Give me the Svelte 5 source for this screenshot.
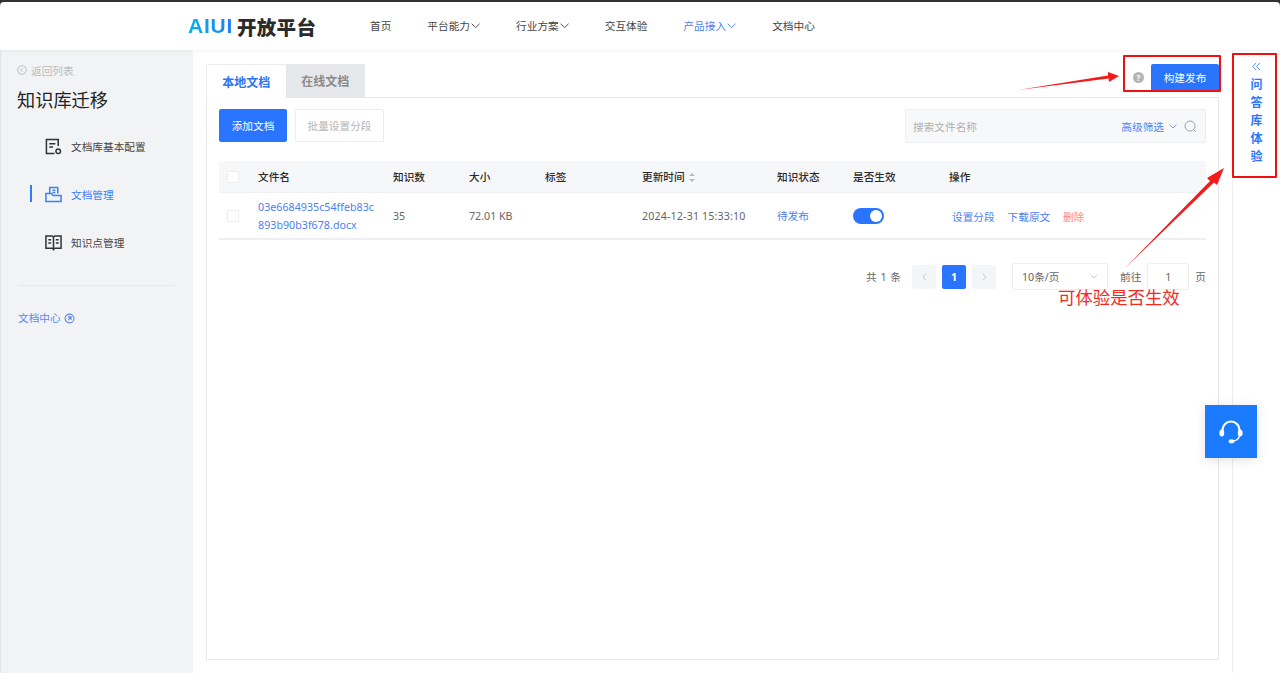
<script>
	const navItems = [
		{ label: '首页' },
		{ label: '平台能力', arrow: true },
		{ label: '行业方案', arrow: true },
		{ label: '交互体验' },
		{ label: '产品接入', arrow: true, active: true },
		{ label: '文档中心' }
	];

	const columns = ['文件名', '知识数', '大小', '标签', '更新时间', '知识状态', '是否生效', '操作'];
</script>

<div class="window">
	<header class="topbar">
		<div class="logo">
			<span class="logo-mark">AIUI</span>
			<span class="logo-text">开放平台</span>
		</div>
		<nav class="nav">
			{#each navItems as item}
				<span class="nav-item" class:active={item.active}>
					{item.label}
					{#if item.arrow}
						<svg class="nav-arrow" viewBox="0 0 10 6"><path d="M.7.8 5 5 9.3.8" /></svg>
					{/if}
				</span>
			{/each}
		</nav>
	</header>

	<div class="body">
		<aside class="sidebar">
			<div class="back">
				<svg viewBox="0 0 12 12" class="back-icon">
					<circle cx="6" cy="6" r="5.2" />
					<path d="M6.8 3.600 4.400 6l2.400 2.400" />
				</svg>
				返回列表
			</div>
			<h1>知识库迁移</h1>
			<ul class="menu">
				<li>
					<svg viewBox="0 0 18 18">
						<path d="M14 8.500V1.500H1.500v15H10" />
						<path d="M4.500 6h6.500M4.500 9.500h4" />
						<circle cx="14" cy="14" r="2.400" />
					</svg>
					文档库基本配置
				</li>
				<li class="current">
					<svg viewBox="0 0 18 18">
						<path d="M5 7.500V1.500h8.500v6.500" />
						<path d="M1 16.500V8h6l1.500 2H17v6.500z" />
						<path d="M8 4.500h3M8 7h3" />
					</svg>
					文档管理
				</li>
				<li>
					<svg viewBox="0 0 18 18">
						<path d="M1 2h6.500L9 3l1.500-1H17v13h-6.500L9 16l-1.500-1H1z" />
						<path d="M9 3v14.500M3.500 6h3M3.500 9.500h3M11.500 6h3M11.500 9.500h3" />
					</svg>
					知识点管理
				</li>
			</ul>
			<div class="doc-link">
				文档中心
				<svg viewBox="0 0 12 12">
					<circle cx="6" cy="6" r="4.800" />
					<path d="M4.300 4.200h3.400v3.400M7.500 4.400 4.300 7.700" />
				</svg>
			</div>
		</aside>

		<main class="main">
			<div class="tabbar">
				<div class="tabs">
					<span class="tab selected">本地文档</span>
					<span class="tab">在线文档</span>
				</div>
				<div class="publish">
					<span class="help">?</span>
					<button class="publish-btn">构建发布</button>
				</div>
			</div>

			<section class="panel">
				<div class="toolbar">
					<button class="btn primary">添加文档</button>
					<button class="btn plain">批量设置分段</button>
					<div class="search">
						<span class="placeholder">搜索文件名称</span>
						<span class="filter">高级筛选</span>
						<svg class="filter-arrow" viewBox="0 0 10 6"><path d="M.7.8 5 5 9.3.8" /></svg>
						<svg class="search-icon" viewBox="0 0 14 14">
							<circle cx="6.500" cy="6.500" r="5.400" />
							<path d="m10.500 10.500 2.300 2.300" />
						</svg>
					</div>
				</div>

				<table>
					<colgroup>
						<col class="c-check" />
						<col class="c-name" />
						<col class="c-count" />
						<col class="c-size" />
						<col class="c-tag" />
						<col class="c-time" />
						<col class="c-state" />
						<col class="c-on" />
						<col />
					</colgroup>
					<thead>
						<tr>
							<th><span class="check"></span></th>
							{#each columns as col}
								<th>
									{col}
									{#if col === '更新时间'}
										<span class="sort"></span>
									{/if}
								</th>
							{/each}
						</tr>
					</thead>
					<tbody>
						<tr>
							<td><span class="check"></span></td>
							<td class="link">03e6684935c54ffeb83c<br />893b90b3f678.docx</td>
							<td>35</td>
							<td>72.01 KB</td>
							<td></td>
							<td class="time">2024-12-31 15:33:10</td>
							<td class="link">待发布</td>
							<td><span class="switch"></span></td>
							<td class="actions">
								<span class="link">设置分段</span>
								<span class="link">下载原文</span>
								<span class="danger">删除</span>
							</td>
						</tr>
					</tbody>
				</table>

				<div class="pager">
					<span class="total">共 1 条</span>
					<span class="page-btn">
						<svg viewBox="0 0 6 10"><path d="M5 1 1 5l4 4" /></svg>
					</span>
					<span class="page-btn on">1</span>
					<span class="page-btn">
						<svg viewBox="0 0 6 10"><path d="m1 1 4 4-4 4" /></svg>
					</span>
					<span class="size-select">
						10条/页
						<svg viewBox="0 0 10 6"><path d="M.7.8 5 5 9.300.8" /></svg>
					</span>
					<span class="goto">前往</span>
					<span class="page-input">1</span>
					<span class="goto">页</span>
				</div>
			</section>
		</main>

		<aside class="qa">
			<svg class="qa-arrow" viewBox="0 0 9 9"><path d="M4.200.8.800 4.500l3.400 3.700M8 .8 4.600 4.500 8 8.200" /></svg>
			<span>问</span>
			<span>答</span>
			<span>库</span>
			<span>体</span>
			<span>验</span>
		</aside>
	</div>

	<button class="support" aria-label="客服">
		<svg viewBox="0 0 24 24">
			<path class="band" d="M3.500 12V10a8.500 8.500 0 0 1 17 0v2" />
			<path class="band thin" d="M20.500 15c-.3 3.500-3 5.800-7 6" />
			<ellipse cx="2.800" cy="13" rx="2.400" ry="3.600" />
			<ellipse cx="21.200" cy="13" rx="2.400" ry="3.600" />
			<ellipse cx="12.500" cy="21.300" rx="2.800" ry="2" />
		</svg>
	</button>

	<!-- hand drawn annotations on top of the screenshot -->
	<span class="mark mark-publish"></span>
	<span class="mark mark-qa"></span>
	<svg class="arrows" viewBox="0 0 1280 673">
		<polygon points="1018,90 1108,75.500 1108,72 1119,76 1109,82 1108.500,78.500" />
		<polygon points="1125,268 1210,181 1207,178 1224,168 1217,185 1214,182.500" />
	</svg>
	<span class="note">可体验是否生效</span>
</div>

<style>
	:global(body) {
		margin: 0;
		background: #333;
	}

	.window {
		position: relative;
		height: 671px;
		margin-top: 2px;
		overflow: hidden;
		background: #fff;
		border-radius: 4px 4px 0 0;
		font-family: 'Noto Sans', 'Noto Sans CJK SC', sans-serif;
		font-size: 10.67px;
		color: #444;
		display: flex;
		flex-direction: column;
	}

	svg {
		fill: none;
		stroke: currentColor;
	}

	/* top navigation */
	.topbar {
		flex: none;
		height: 48px;
		padding-left: 188px;
		display: flex;
		align-items: center;
		box-shadow: 0 1px 4px rgba(0, 0, 0, 0.05);
		position: relative;
	}

	.logo {
		width: 182px;
		display: flex;
		align-items: center;
		gap: 2px;
	}

	.logo-mark {
		width: 47px;
		font-family: 'Liberation Sans', sans-serif;
		font-size: 21px;
		font-weight: 700;
		letter-spacing: 0.800px;
		background: linear-gradient(90deg, #06b4e8, #1f7bfa);
		-webkit-background-clip: text;
		background-clip: text;
		color: transparent;
	}

	.logo-text {
		font-size: 19.500px;
		font-weight: 900;
		letter-spacing: 0.300px;
		color: #2b2b2b;
	}

	.nav {
		display: flex;
	}

	.nav-item {
		display: flex;
		align-items: center;
		margin-right: 36px;
		color: #444;
		line-height: 16px;
	}

	.nav-item.active {
		color: #4a84f5;
	}

	.nav-arrow {
		width: 9.300px;
		height: 5.500px;
		stroke-width: 1;
		margin-left: 0.800px;
	}

	.body {
		flex: 1;
		display: flex;
		min-height: 0;
	}

	/* left menu */
	.sidebar {
		flex: none;
		width: 193px;
		box-sizing: border-box;
		padding: 12px 18px 0 16px;
		background: #f2f3f5;
		border-left: 1px solid #e4e4e6;
	}

	.back {
		display: flex;
		align-items: center;
		gap: 4px;
		height: 16px;
		color: #bbb;
	}

	.back-icon {
		width: 10px;
		height: 10px;
		stroke-width: 1.200;
	}

	h1 {
		margin: 7px 0 0 0;
		font-size: 18.200px;
		font-weight: 400;
		line-height: 30px;
		color: #222;
	}

	.menu {
		list-style: none;
		margin: 7px 0 0 1px;
		padding: 0 0 19px;
		border-bottom: 1px solid #e6e7ea;
	}

	.menu li {
		position: relative;
		display: flex;
		align-items: center;
		gap: 9px;
		height: 48px;
		padding-left: 27px;
		color: #444;
	}

	.menu li svg {
		width: 17px;
		height: 17px;
		stroke-width: 1.600;
		color: #333;
	}

	.menu li.current,
	.menu li.current svg {
		color: #3f7ff5;
	}

	.menu li.current::before {
		content: '';
		position: absolute;
		left: 12px;
		top: 15px;
		width: 2px;
		height: 17px;
		background: #2e7bff;
	}

	.doc-link {
		margin-top: 23px;
		display: flex;
		align-items: center;
		gap: 3px;
		margin-left: 1px;
		color: #5b87f5;
		line-height: 18px;
	}

	.doc-link svg {
		width: 11px;
		height: 11px;
		stroke-width: 1.200;
	}

	/* main card */
	.main {
		flex: 1;
		min-width: 0;
		display: flex;
		flex-direction: column;
		padding: 14px 13px 13px;
	}

	.tabbar {
		flex: none;
		height: 33px;
		box-sizing: content-box;
		display: flex;
		justify-content: space-between;
		border-bottom: 1px solid #e8e8ea;
	}

	.tabs {
		display: flex;
	}

	.tab {
		width: 79.500px;
		height: 33px;
		display: flex;
		align-items: center;
		justify-content: center;
		font-size: 12px;
		font-weight: 700;
		color: #8a8a8a;
		background: #e6e7ea;
	}

	.tab.selected {
		color: #2a75f6;
		background: #fff;
		margin-bottom: -1px;
		height: 34px;
		border: solid #eeeeef;
		border-width: 1px 0 0 1px;
		box-sizing: border-box;
	}

	.publish {
		display: flex;
		align-items: flex-start;
		gap: 7px;
	}

	.help {
		width: 11px;
		height: 11px;
		margin-top: 8px;
		border-radius: 50%;
		background: #b4b4b4;
		color: #fff;
		font-size: 8px;
		font-weight: 700;
		line-height: 11px;
		text-align: center;
	}

	.publish-btn {
		width: 68px;
		height: 26px;
		padding: 0;
		border: 0;
		border-radius: 2px 2px 0 0;
		background: #2a75ff;
		color: #fff;
		font: inherit;
	}

	.panel {
		flex: 1;
		min-height: 0;
		padding: 11px 12px 0;
		border: 1px solid #e8e8ea;
		border-top: 0;
	}

	.toolbar {
		display: flex;
		align-items: flex-start;
		height: 34px;
	}

	.btn {
		height: 33px;
		padding: 0;
		border-radius: 2px;
		font: inherit;
	}

	.btn.primary {
		width: 68px;
		border: 0;
		background: #2a75ff;
		color: #fff;
	}

	.btn.plain {
		width: 89px;
		margin-left: 8px;
		border: 1px solid #ececee;
		background: #fff;
		color: #b5b5b5;
	}

	.search {
		margin-left: auto;
		width: 301px;
		height: 34px;
		box-sizing: border-box;
		padding: 0 8px 0 7px;
		display: flex;
		align-items: center;
		background: #f7f8fa;
		border: 1px solid #eeeff1;
		border-radius: 2px;
	}

	.placeholder {
		flex: 1;
		color: #b0b0b0;
	}

	.filter {
		color: #4f83f5;
	}

	.filter-arrow {
		width: 8px;
		height: 5px;
		margin-left: 5px;
		color: #4f83f5;
	}

	.search-icon {
		width: 13px;
		height: 13px;
		margin-left: 7px;
		color: #9a9a9a;
	}

	/* file table */
	table {
		width: 100%;
		margin-top: 18px;
		table-layout: fixed;
		border-collapse: collapse;
	}

	.c-check { width: 39px; }
	.c-name { width: 135px; }
	.c-count { width: 76px; }
	.c-size { width: 76px; }
	.c-tag { width: 97px; }
	.c-time { width: 135px; }
	.c-state { width: 76px; }
	.c-on { width: 96px; }

	th {
		height: 31px;
		padding: 0;
		text-align: left;
		font-weight: 500;
		color: #2a2a2a;
		background: #f6f7f9;
		border-bottom: 1px solid #eef0f3;
	}

	td {
		height: 45px;
		padding: 0;
		line-height: 18px;
		color: #666;
		border-bottom: 2px solid #eeeff3;
	}

	td.link,
	span.link {
		color: #4d80f5;
		letter-spacing: 0.030px;
	}

	td.time {
		letter-spacing: 0.150px;
	}

	.check {
		display: block;
		width: 10px;
		height: 10px;
		margin-left: 8px;
		background: #fff;
		border: 1px solid #eeeeef;
		border-radius: 1px;
	}

	.sort {
		display: inline-block;
		position: relative;
		width: 6px;
		height: 9px;
		margin-left: 2px;
		vertical-align: -1px;
	}

	.sort::before,
	.sort::after {
		content: '';
		position: absolute;
		left: 0;
		border: 3px solid transparent;
	}

	.sort::before {
		top: -3px;
		border-bottom: 3.500px solid #b9b9b9;
	}

	.sort::after {
		bottom: -3px;
		border-top: 3.500px solid #b9b9b9;
	}

	.switch {
		display: block;
		position: relative;
		width: 31px;
		height: 16px;
		border-radius: 8px;
		background: #2a75ff;
	}

	.switch::after {
		content: '';
		position: absolute;
		right: 2px;
		top: 2px;
		width: 12px;
		height: 12px;
		border-radius: 50%;
		background: #fff;
	}

	.actions {
		padding: 2px 0 0 3px;
		height: 43px;
	}

	.actions span {
		margin-right: 10px;
	}

	.danger {
		color: #f58a8a;
	}

	/* pagination */
	.pager {
		margin-top: 23px;
		display: flex;
		align-items: center;
		justify-content: flex-end;
		color: #666;
	}

	.total {
		margin-right: 11px;
		word-spacing: 1px;
	}

	.page-btn {
		width: 24px;
		height: 24px;
		margin-right: 6px;
		display: flex;
		align-items: center;
		justify-content: center;
		border-radius: 2px;
		background: #f4f5f7;
		color: #bbb;
	}

	.page-btn svg {
		width: 5px;
		height: 8px;
	}

	.page-btn.on {
		background: #2a75ff;
		color: #fff;
		font-weight: 700;
	}

	.size-select {
		width: 96px;
		height: 27px;
		box-sizing: border-box;
		margin: 0 12px 0 10px;
		padding: 0 9px;
		display: flex;
		align-items: center;
		justify-content: space-between;
		border: 1px solid #eeeff1;
		border-radius: 2px;
	}

	.size-select svg {
		width: 8px;
		height: 5px;
		color: #bbb;
	}

	.page-input {
		width: 42px;
		height: 27px;
		box-sizing: border-box;
		margin: 0 6px;
		display: flex;
		align-items: center;
		justify-content: center;
		border: 1px solid #eeeff1;
		border-radius: 2px;
	}

	/* right side drawer */
	.qa {
		flex: none;
		width: 48px;
		box-sizing: border-box;
		padding-top: 12px;
		border-left: 1px solid #eeeeef;
		display: flex;
		flex-direction: column;
		align-items: center;
		font-size: 12px;
		font-weight: 700;
		line-height: 18px;
		color: #2a75ff;
	}

	.qa-arrow {
		width: 9px;
		height: 9px;
		margin-bottom: 5px;
		stroke-width: 0.900;
		color: #4a84f5;
	}

	/* overlays */
	.support {
		position: absolute;
		left: 1205px;
		top: 403px;
		width: 52px;
		height: 53px;
		padding: 0;
		border: 0;
		background: #1a7bff;
		box-shadow: 0 2px 10px rgba(0, 0, 0, 0.12);
		display: flex;
		align-items: center;
		justify-content: center;
	}

	.support svg {
		width: 24px;
		height: 24px;
		fill: #fff;
		stroke: none;
		overflow: visible;
	}

	.support .band {
		fill: none;
		stroke: #fff;
		stroke-width: 2.200;
	}

	.support .thin {
		stroke-width: 1.400;
	}

	.mark {
		position: absolute;
		border: 2.500px solid #f01010;
		border-radius: 1px;
		box-sizing: border-box;
	}

	.mark-publish {
		left: 1123px;
		top: 53px;
		width: 98px;
		height: 37px;
	}

	.mark-qa {
		left: 1232px;
		top: 51px;
		width: 45px;
		height: 125px;
	}

	.arrows {
		position: absolute;
		left: 0;
		top: -2px;
		width: 1280px;
		height: 673px;
		fill: #f41a1a;
		stroke: none;
		pointer-events: none;
	}

	.note {
		position: absolute;
		left: 1058px;
		top: 282px;
		font-size: 17.400px;
		line-height: 26px;
		color: #f42a1e;
	}
</style>
